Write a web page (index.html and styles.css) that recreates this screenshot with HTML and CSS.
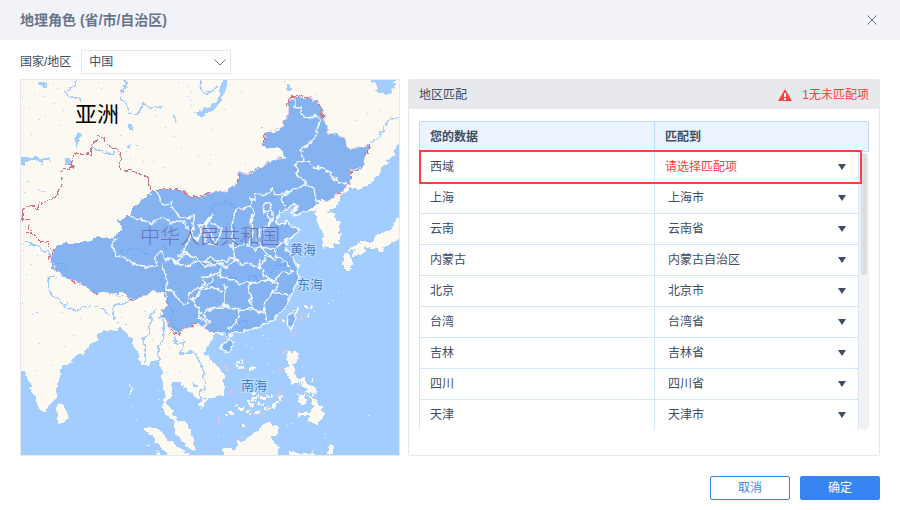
FILE: index.html
```
<!DOCTYPE html>
<html lang="zh-CN">
<head>
    <meta charset="UTF-8">
    <meta name="viewport" content="width=device-width, initial-scale=1.0">
    <title>地理角色</title>
    <link rel="stylesheet" href="styles.css">
</head>
<body>

    <div class="dialog">
        <!-- Title bar -->
        <header class="dialog-header">
            <h1>地理角色 (省/市/自治区)</h1>
            <button class="close" type="button" aria-label="关闭">
                <svg width="10" height="10" viewBox="0 0 10 10"><path d="M0.5 0.5L9.5 9.5M9.5 0.5L0.5 9.5"/></svg>
            </button>
        </header>

        <!-- Country -->
        <div class="filter">
            <label for="country">国家/地区</label>
            <div class="country-box">
                <select id="country"><option>中国</option></select>
                <svg width="12" height="7" viewBox="0 0 12 7"><path d="M0.5 0.5L6 6L11.5 0.5"/></svg>
            </div>
        </div>

        <main class="content">
            <!-- Map -->
            <div class="map">
                <svg viewBox="21 80 378 376" preserveAspectRatio="xMidYMid slice" role="img" aria-label="地图">
                    <!-- rough coast and border lines -->
                    <filter id="rough" filterUnits="userSpaceOnUse" x="12" y="70" width="400" height="400" color-interpolation-filters="sRGB">
                        <feTurbulence type="fractalNoise" baseFrequency="0.16" numOctaves="2" seed="4"/>
                        <feDisplacementMap in="SourceGraphic" scale="7" xChannelSelector="R" yChannelSelector="G"/>
                    </filter>

                    <g filter="url(#rough)">
                    <!-- land -->
                    <g class="land">
                        <path d="M12 70H371V80L373 84L377 85L378 89L375 92L380 95L383 92L386 96L392 95L390 89L394 87L393 83L399 81H410V140L399 145L396 149L394 156L389 159L385 165L381 169L378 175L374 179L371 185L364 187L358 190L351 187L348 192L342 195L341 201L338 205L333 208L327 212L334 214L335 218L339 222L338 228L340 237L339 243L334 245L329 248L325 247L322 250L323 245L321 241L324 237L323 232L319 229L317 222L318 216L315 213L318 208L311 211L305 213L300 214L295 217L292 213L295 210L298 206L295 203L291 205L287 210L281 213L278 216L276 222L283 226L288 221L292 226L300 231L295 235L291 239L287 241L285 248L290 254L294 260L297 266L298 280L295 288L293 292L288 300L285 307L280 315L274 320L268 323L260 326L251 329L242 332L235 334L231 335L231 340L228 340L227 334L217 333L213 339L209 342L206 348L205 355L210 361L215 364L221 369L224 376L225 388L222 395L215 398L209 399L203 405L200 410L199 404L202 400L196 398L190 394L185 388L180 384L177 382L172 383L171 389L170 396L167 403L168 407L173 412L175 419L181 421L186 422L190 429L192 436L193 444L196 451L190 449L184 444L178 438L174 430L174 423L169 416L163 410L163 404L165 396L163 384L162 375L159 366L157 362L153 360L149 366L140 367L139 355L136 351L133 343L129 338L125 332L121 328L118 331L113 330L109 332L105 331L98 335L97 341L90 344L86 350L80 354L74 360L67 365L60 369L60 379L57 386V398L50 403L47 411L43 413L38 407L36 401L32 390L28 382L26 374L21 367L12 360Z"/>
                        <path d="M58 403L62 405L66 413L69 419L65 423L58 424L57 416Z"/>
                        <path d="M145 427L154 428L161 433L169 441L177 446L185 452L192 462H170L162 449L155 443L151 436L146 431Z"/>
                        <path d="M223 464L224 449L236 448L237 442L246 440L253 434L260 427L265 424L269 421L274 426L279 429L276 434L272 438L274 443L280 447L274 464Z"/>
                        <path d="M286 464L288 453L303 453L312 453L314 447L315 464Z"/>
                        <path d="M288 353L297 351L299 358L298 363L294 366L295 375L299 379L305 380L307 385L314 387L317 396L309 392L304 387L302 382L297 382L293 385L289 380L287 375L285 368L289 366L287 360Z"/>
                        <path d="M297 394L305 395L306 401L303 407L299 402ZM309 396L316 400L318 405L322 407L323 415L320 421L316 426L310 420L309 415L302 415L297 419L299 412L305 412L309 414L314 408Z"/>
                        <path d="M344 256L351 255L353 262L349 271L344 269L343 260ZM356 249L361 246L366 248L363 253L357 257L353 254ZM347 253L352 246L360 243L371 242L377 236L384 233L391 229L399 217L408 210V238L399 241L391 243L385 247L381 254L376 249L371 250L362 246Z"/>
                        <path d="M130 382L132 388L131 397L130 391ZM148 443L151 444L149 446ZM156 450L160 455L158 456ZM331 445L334 449L331 456L328 454Z"/>
                    </g>

                    <!-- lakes and small waters -->
                    <path class="water" d="M12 158L28 157L38 157L44 160L52 158L51 161L42 162L33 159L28 162L24 166L12 167ZM62 158L68 159L72 165L67 164ZM37 192L46 190L44 193ZM194 114L202 111L213 104L220 96L224 72H228L226 89L223 98L214 110L202 116ZM38 83L48 82L44 88ZM128 126L132 124L134 129L131 132ZM127 145L131 144L131 149ZM173 117L176 116L175 124ZM77 132L81 134L80 142L77 147L80 150L76 148L75 140ZM287 84H290V91L287 93ZM191 382L196 384L197 388L193 386Z"/>
                    <path class="river" d="M76 72V80L75 86L65 92L70 97L80 98V101M121 76L126 84L121 98L127 106L129 115H137L143 104L151 109L164 108M202 76L200 88L205 94L212 92L218 88M91 147L110 155L115 153M15 243L31 243L40 249L54 259M56 277L48 279L48 290L61 303L74 311L86 307H101L111 317M114 319V306L136 300L147 294M155 310L150 318V331L143 339L146 362M164 320V341L158 345V362M184 341L181 355L194 353L201 365L205 375L204 391L200 393L203 400L209 398M174 337L173 342L183 344M370 142L380 137L384 126L390 122L405 112"/>

                    <!-- provinces -->
                    <path class="china" d="M151 190L182 190L190 195L200 197L214 192L225 192L234 187L238 184L237 178L239 173L248 175L255 169L262 168L268 162L272 160L280 157L285 158L282 151L278 148L270 149L262 147L263 139L267 133L274 134L280 129L283 128L285 119L289 113L287 103L295 99L300 97L312 99L317 101L320 106L324 114L325 122L329 132L336 133L343 137L347 149L355 149L370 145L366 157L363 168L358 172L351 171L350 186L342 191L335 195L330 200L320 201L312 208L305 213L295 217L292 213L298 206L293 204L287 210L281 213L278 216L276 222L283 226L288 221L292 226L300 231L295 235L287 241L285 248L290 254L297 266L298 280L293 292L288 300L285 307L280 315L268 323L251 329L242 332L231 335L231 340L228 340L227 334L217 333L210 332L205 325L196 324L184 328L180 336L175 331L168 328L166 320L159 317L162 311L166 307L165 292L153 292L145 296L137 300L127 298L123 293L107 293L92 292L80 283L71 280L63 277L58 272L52 270L50 263L52 260L53 250L62 245L73 244L83 242L92 241L100 237L113 238L119 235L122 230L117 221L130 216L132 208L137 205L142 200L150 195Z"/>
                    <path class="inner-river" d="M120 252L130 249L142 251L151 256M155 246L165 247L171 252M205 225L214 205L226 203L237 208M51 263L65 264L67 270M161 280L166 292L168 304L174 311L170 322L177 331M198 267L211 262L229 276L245 285L253 275L260 282L270 277L275 265L291 265M238 323H245L247 329M206 293L216 283M279 263L290 268"/>

                    <!-- borders -->
                    <path class="shade" d="M182 190L190 195L200 197L214 192L225 192L237 184L238 173L248 175L262 168L272 160L285 158M262 147L267 133L283 128L289 113L287 103L298 97L312 99L320 106L329 132L343 137L348 149L370 145L363 168L351 171L350 186L330 200L320 203M210 332L205 325L184 328L180 336L168 328L166 320L159 317M166 307V292H153L137 300L127 298L107 293H92L80 283L63 277L50 263L52 251"/>
                    <path class="red" d="M151 190L148 180L145 177L135 172L120 170L120 166L121 156L118 152L116 149L110 147L107 143L103 141L103 137H97L97 142L90 145V155H83L77 153L74 154L73 161L71 165L73 169L60 171V177L62 183L61 189L58 195L50 200L45 204L40 203L37 208L29 206L23 211L22 218L27 221L30 221M28 226L31 232L27 233L33 236L37 238L40 242L48 243L50 248L53 250L49 259L52 261"/>
                    <path class="red" d="M152 190H179L188 195L199 197L210 193M237 182V175M262 147L266 133M286 106L292 98L301 96L312 98M319 105L324 118M370 145L366 157M351 171V179M342 193L336 194M70 280L78 285M92 292L98 294M127 299L135 301M171 331L180 336L181 329M190 326L198 325"/>
                    <g class="province">
                        <path d="M156 190L161 202L165 206L171 203L172 209L177 212L180 218L188 219L195 215L193 224L192 237L198 241L201 231L198 226L205 224L213 216M130 216L137 221L145 220L150 224L157 222L162 216L168 222L183 223L190 231L188 243L183 251L187 254L182 258L177 256M117 238L113 241V251L117 257L127 260L135 265L148 267L155 266L157 255L162 253L165 258L172 259L175 263L180 258L185 251L193 259L203 262L211 259L220 261M202 225L206 244L214 246L219 239L222 228L212 225L210 217L205 226L210 235L215 240"/>
                        <path d="M160 264L166 275L167 289L173 292L182 304H188L190 294L197 288L202 290L207 286L214 281L209 276L202 278L204 284L198 295L192 301L198 308L200 314L214 310M198 309L198 318L207 323M166 260L177 262L187 267L193 263L201 262L204 268L216 265L225 265"/>
                        <path d="M295 100L295 107L301 109L303 118L313 118L317 115L320 121L315 137L311 144L300 151L305 158L301 162L295 164L298 176L305 180L305 185L313 188L315 194L318 204M301 162L308 163L313 167L325 170L330 174L334 180L341 182L349 187M305 186L295 190L283 195L281 201L285 208M283 195H275L273 190L267 195H255V200L250 198L252 206L243 209L236 210L232 225V248L248 245L255 250L262 248L275 249L280 244L287 241M252 206L253 213L250 222L252 233L249 245M266 204L262 208L264 213L269 211L272 206L269 203ZM269 211L268 219L273 219V211L270 209M273 220L265 228L260 232L258 241L262 248L265 253L272 257L276 262M275 249L277 259L287 263L291 270M232 248L235 258L227 261L218 262M235 258L240 265L251 264L260 269L265 257L272 258"/>
                        <path d="M205 263L218 265L225 268L237 260M205 277L215 275L221 270L219 276L230 280L248 285L254 283L268 280L275 282L280 274L292 273M225 284L225 306L240 311L252 310L250 297L248 285M252 310L263 313L265 303L273 293L277 286L268 280M273 293L282 295L290 296M263 313L268 321M240 311L237 323L229 330M205 310L215 308L225 306M205 290L213 287L222 292M260 260L260 270L268 280M203 316L209 322L206 326"/>
                        <path d="M318 208L305 213L295 217L292 213L298 206L293 204L287 210L281 213L276 222L283 226L288 221L292 226L300 231L295 235L287 241L285 248L290 254L297 266L298 280L293 292L288 300L285 307L280 315L268 323L251 329L242 332L231 335L230 341L228 340L227 334L217 333"/>
                    </g>
                    <path class="island" d="M223 344L229 341L235 342L232 349L227 353L221 351ZM297 309L296 319L291 330L287 325L288 317Z"/>
                    <path class="reef" d="M281 321h4M305 307h3M311 307h2M237 362h6M236 366h3M240 368h4M250 369h6M252 393h5M253 398h6M247 402h9M261 398h4M265 396h7M249 406h5M258 405h7M240 409h4M245 411h6M226 416h2M230 413h3M236 406h2M255 413h4M249 415h3M242 426h4M264 409h6M272 408l12-13M307 316h2M303 380h2M312 381h2M298 384h2M305 391h3M312 396h2"/>
                    </g>

                    <path class="specks" d="M22 98h1M29 108h1M34 95h1M43 97h1M45 116h1M53 84h1M57 89h1M63 111h1M59 126h1M54 104h1M39 120h1M31 135h1M98 83h1M101 89h1M110 126h1M120 136h1M126 152h1M136 146h2M130 159h1M143 162h1M153 162h1M164 168h1M178 83h1M188 87h1M191 93h1M190 101h1M191 106h1M188 97h1M165 128h1M155 117h1M174 137h1M181 149h1M198 157h1M209 165h1M211 130h1M241 92h1M224 110h1M210 155h1M245 165h1M284 82h1M315 95h1M355 121h1M367 114h1M380 111h1M261 128h2M41 165h2M27 182h2M24 193h1M30 237h1M23 251h1M31 265h1M26 275h1M37 256h1M22 304h1M32 315h1M36 313h2M62 313h1M80 319h1M39 344h1M52 366h1M64 347h1M36 371h1M73 336h1M117 323h2M121 318h1M125 325h2M119 328h2M152 340h1M144 312h1M165 357h1M169 349h1M181 388h1M180 373h1M166 373h1"/>
                    <path class="islets" d="M246 346h1M251 348h1M263 336h1M267 339h1M267 365h1M273 372h1M218 436h1M314 312h1M328 304h1M332 301h1M338 293h1M343 257h1M368 416h1M324 434h1M325 438h1M287 426h1M291 424h1M132 407h1M136 420h1M129 398h1M158 391h1M159 400h1"/>
                    <path class="sea-line" d="M302 314L300 322M296 332L292 337M286 349L283 355M280 367V374M281 390L277 398M264 412L260 418M225 365L228 372M231 390L229 396M219 419V426M238 439L244 438"/>

                    <!-- Labels -->
                    <text class="continent" x="75" y="122">亚洲</text>
                    <text class="nation" x="140" y="244">中华人民共和国</text>
                    <text class="sea" x="290" y="254">黄海</text>
                    <text class="sea" x="297" y="289">东海</text>
                    <text class="sea" x="241" y="390">南海</text>
                </svg>
            </div>

            <!-- Matching -->
            <section class="panel">
                <div class="panel-header">
                    <h2>地区匹配</h2>
                    <p class="warning">
                        <svg width="14" height="12" viewBox="0 0 14 12"><path d="M7 0L14 12H0Z" fill="#ff4040"/><path d="M7 4V8M7 9V11" stroke="#ffffff" stroke-width="2"/></svg>
                        1无未匹配项
                    </p>
                </div>
                <div class="match-list">
                    <table>
                        <thead>
                            <tr><th>您的数据</th><th>匹配到</th></tr>
                        </thead>
                        <tbody>
                            <tr class="unmatched"><td>西域</td><td><select aria-label="西域"><option>请选择匹配项</option></select></td></tr>
                            <tr><td>上海</td><td><select aria-label="上海"><option>上海市</option></select></td></tr>
                            <tr><td>云南</td><td><select aria-label="云南"><option>云南省</option></select></td></tr>
                            <tr><td>内蒙古</td><td><select aria-label="内蒙古"><option>内蒙古自治区</option></select></td></tr>
                            <tr><td>北京</td><td><select aria-label="北京"><option>北京市</option></select></td></tr>
                            <tr><td>台湾</td><td><select aria-label="台湾"><option>台湾省</option></select></td></tr>
                            <tr><td>吉林</td><td><select aria-label="吉林"><option>吉林省</option></select></td></tr>
                            <tr><td>四川</td><td><select aria-label="四川"><option>四川省</option></select></td></tr>
                            <tr><td>天津</td><td><select aria-label="天津"><option>天津市</option></select></td></tr>
                        </tbody>
                    </table>
                    <div class="scrollbar"><div class="thumb"></div></div>
                </div>
            </section>
        </main>

        <!-- Buttons -->
        <footer class="actions">
            <button class="btn" type="button">取消</button>
            <button class="btn primary" type="button">确定</button>
        </footer>
    </div>

</body>
</html>
```
FILE: styles.css
```
/* General Styling */
* {
    box-sizing: border-box;
}
body {
    margin: 0;
    background: #ffffff;
    color: #3d4d66;
    font-family: "Liberation Sans", "Noto Sans CJK SC", sans-serif;
    font-size: 12px;
    line-height: 18px;
}
h1, h2, p {
    margin: 0;
}
button, select {
    font: inherit;
    color: inherit;
}
select {
    appearance: none;
    border: none;
    background: none;
    padding: 0;
    width: 100%;
}
/* Title bar */
.dialog-header {
    display: flex;
    align-items: center;
    justify-content: space-between;
    height: 40px;
    padding: 0 20px;
    background: #f2f3f8;
}
h1 {
    font-size: 14px;
    font-weight: 700;
    color: #67758c;
}
.close {
    display: flex;
    padding: 3px;
    border: none;
    background: none;
    cursor: pointer;
}
.close svg, .country-box svg {
    fill: none;
    stroke: #67758c;
}
/* Country */
.filter {
    display: flex;
    align-items: center;
    gap: 10px;
    padding: 10px 20px 5px;
}
.country-box {
    position: relative;
    width: 150px;
}
.country-box select {
    display: block;
    height: 24px;
    padding: 0 7px;
    border: 1px solid #e6e8ed;
}
.country-box svg {
    position: absolute;
    right: 5px;
    top: 9px;
    pointer-events: none;
}
.content {
    display: grid;
    grid-template-columns: 380fr 472fr;
    gap: 8px;
    padding: 0 20px;
}
/* Map */
.map {
    border: 1px solid #e6e8ed;
    background: #a3ccff;
}
.map svg {
    display: block;
    width: 100%;
    height: 0;
    min-height: 100%;
}
.map path {
    fill: none;
    shape-rendering: crispEdges;
}
.map .land path {
    fill: #fcf9f2;
}
.map .water {
    fill: #a3ccff;
}
.map .specks, .map .river {
    stroke: #a3ccff;
}
.map .river {
    stroke-width: 1.5;
}
.map .china {
    fill: #85b3f2;
}
.map .inner-river {
    stroke: #70a5f2;
}
.map .shade {
    stroke: #e6d2df;
}
.map .red {
    stroke: #cf7480;
}
.map .province path {
    stroke: #f5faff;
    stroke-width: 1.5;
    shape-rendering: auto;
}
.map .island {
    fill: #85b3f2;
    stroke: #f5faff;
    stroke-width: 1.5;
    shape-rendering: auto;
}
.map .islets {
    stroke: #fcf9f2;
}
.map .reef {
    stroke: #fcf9f2;
    stroke-width: 3;
    stroke-dasharray: 4 1;
}
.map .sea-line {
    stroke: #dcc5dc;
    stroke-width: 2;
    shape-rendering: auto;
}
.continent {
    font-size: 22px;
    fill: #000000;
}
.nation {
    font-size: 20px;
    font-weight: 300;
    fill: #6f70bc;
}
.sea {
    font-size: 13px;
    fill: #4280c8;
    stroke: #c4dfff;
    stroke-width: 2px;
    paint-order: stroke;
}
/* Matching */
.panel {
    border: 1px solid #e8e9ed;
    border-radius: 2px;
}
.panel-header {
    display: flex;
    align-items: center;
    justify-content: space-between;
    height: 29px;
    padding: 0 10px;
    background: #e8e9ed;
}
h2 {
    font-size: 12px;
    font-weight: 400;
}
.warning {
    display: flex;
    align-items: center;
    gap: 10px;
    color: #ff4040;
}
.match-list {
    position: relative;
    margin: 12px 10px 25px;
}
table, thead, tbody {
    display: block;
}
tr {
    position: relative;
    display: grid;
    grid-template-columns: 236px 1fr;
}
th, td {
    height: 31px;
    padding: 0 10px;
    line-height: 30px;
    text-align: left;
}
th {
    font-weight: 700;
    background: #ebf3ff;
    border-top: 1px solid #bfd9ff;
    border-right: 1px solid #bfd9ff;
    border-bottom: 1px solid #bfd9ff;
}
th:first-child {
    border-left: 1px solid #bfd9ff;
}
tbody {
    margin-right: 10px;
}
td {
    position: relative;
    border-right: 1px solid #d4e5ff;
    border-bottom: 1px solid #d4e5ff;
}
td:first-child {
    border-left: 1px solid #d4e5ff;
}
tr:last-child td {
    height: 30px;
    border-bottom: none;
}
td select {
    display: block;
    height: 30px;
    padding-left: 3px;
}
td:last-child::after {
    content: "";
    position: absolute;
    right: 12px;
    top: 12px;
    border: 4px solid transparent;
    border-top: 6px solid #3d4d66;
    border-bottom: none;
    pointer-events: none;
}
.unmatched select {
    padding-left: 0;
    color: #ff4040;
}
.unmatched::after {
    content: "";
    position: absolute;
    inset: -2px -3px -1px 0;
    z-index: 1;
    border: 2px solid #ff4040;
    pointer-events: none;
}
.scrollbar {
    position: absolute;
    top: 32px;
    right: 0;
    bottom: 0;
    width: 10px;
    padding: 0 2px;
    border-radius: 5px;
    background: #f2f2f2;
}
.thumb {
    height: 122px;
    border-radius: 3px;
    background: #dcdee2;
}
/* Buttons */
.actions {
    display: flex;
    justify-content: flex-end;
    gap: 10px;
    padding: 20px;
}
.btn {
    width: 80px;
    height: 24px;
    padding: 0;
    border: 1px solid #3685f2;
    border-radius: 2px;
    background: #ffffff;
    color: #3685f2;
    cursor: pointer;
}
.primary {
    background: #3685f2;
    color: #ffffff;
}
```
